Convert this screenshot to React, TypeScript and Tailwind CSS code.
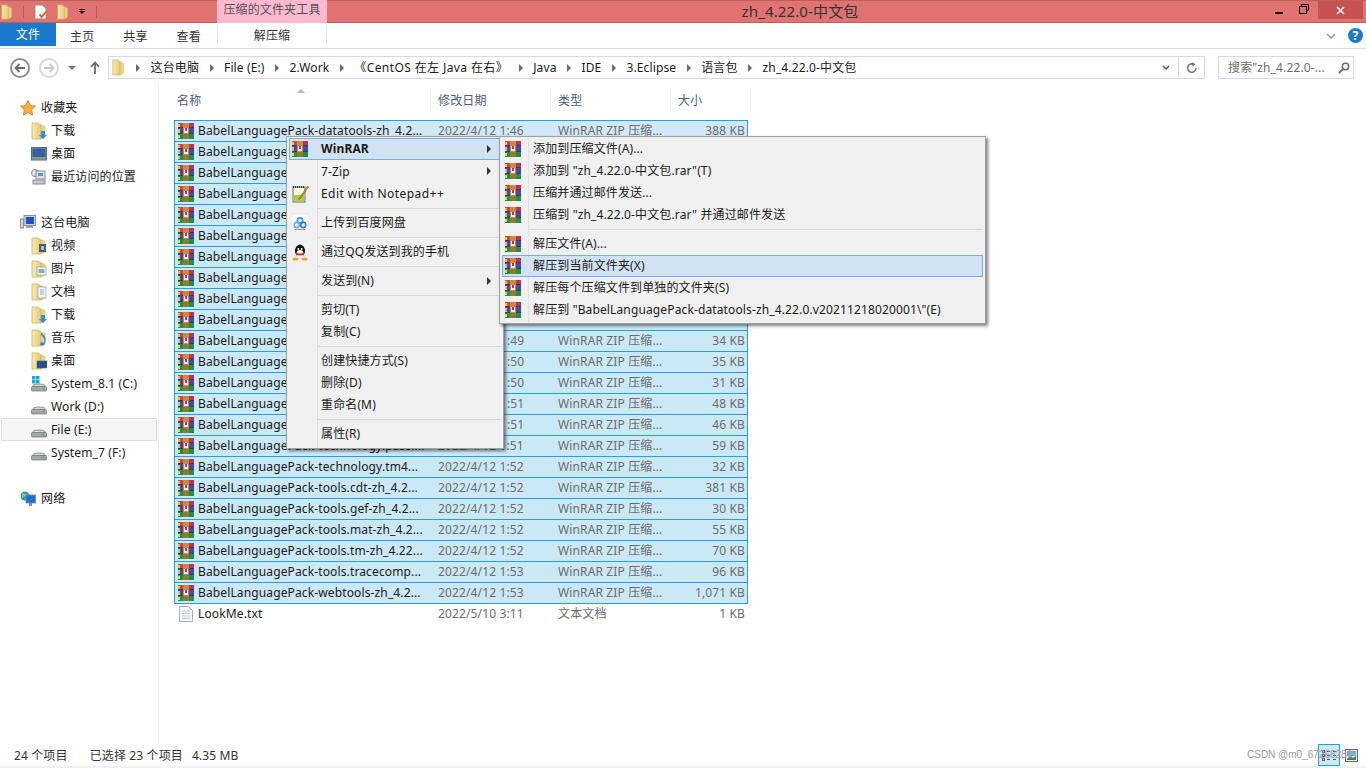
import React from "react";

const FONT = "[font-family:'Noto_Sans','Noto_Sans_CJK_SC',sans-serif] tracking-[0.13px]";

function Rar({ cls = "" }: { cls?: string }) {
  return (
    <svg width="16" height="16" viewBox="0 0 16 16" className={"shrink-0 " + cls} shapeRendering="crispEdges">
      <rect x="0" y="0" width="16" height="5" fill="#c5304f" />
      <rect x="0" y="0" width="5" height="5" fill="#d0463f" />
      <rect x="0" y="1" width="2" height="3" fill="#e9c15a" />
      <rect x="0" y="5" width="16" height="6" fill="#4b46a8" />
      <rect x="0" y="6" width="2" height="4" fill="#d9c26a" />
      <rect x="0" y="11" width="16" height="5" fill="#1f9145" />
      <rect x="0" y="12" width="2" height="3" fill="#dcd27a" />
      <rect x="0" y="4" width="16" height="1" fill="#3a3a6a" />
      <rect x="0" y="10" width="16" height="1" fill="#2c4a3a" />
      <rect x="5" y="0" width="6" height="16" fill="#c98a3f" />
      <rect x="6" y="5" width="4" height="5" fill="#f4efe4" />
      <rect x="7" y="5" width="2" height="3" fill="#c5304f" />
      <rect x="5" y="11" width="6" height="5" fill="#8f7a35" />
    </svg>
  );
}

function Folder({ children, w = 16, h = 18 }: { children?: React.ReactNode; w?: number; h?: number }) {
  return (
    <svg width={w} height={h} viewBox="0 0 16 18" preserveAspectRatio="none" className="shrink-0">
      <defs>
        <linearGradient id="fg" x1="0" x2="1" y1="0" y2="0">
          <stop offset="0" stopColor="#f9eab0" />
          <stop offset="1" stopColor="#e6ca74" />
        </linearGradient>
      </defs>
      <path d="M1 1h6l3 2v14H1z" fill="url(#fg)" stroke="#cfb268" strokeWidth="0.8" />
      <path d="M10 3l4 1.500V15l-4 2z" fill="#ecd488" stroke="#cfb268" strokeWidth="0.6" />
      {children}
    </svg>
  );
}

function Drive({ win }: { win?: boolean }) {
  return (
    <svg width="16" height="16" viewBox="0 0 16 16" className="shrink-0">
      {win && (
        <g fill="#19a5e8">
          <rect x="1" y="0" width="3.500" height="3.500" />
          <rect x="5" y="0" width="3.500" height="3.500" />
          <rect x="1" y="4" width="3.500" height="3.500" />
          <rect x="5" y="4" width="3.500" height="3.500" />
        </g>
      )}
      <path d="M2 9.500C3 7.500 13 7.500 14 9.500V14.500H2z" fill="#d4d7d9" stroke="#7d8184" strokeWidth="0.8" />
      <rect x="0.500" y="10.500" width="15" height="4.500" rx="1" fill="#a3a8ab" stroke="#5f6365" strokeWidth="0.6" />
      <rect x="11.500" y="11.500" width="2" height="2" fill="#5fc23c" />
    </svg>
  );
}

function SideIcon({ k }: { k: string }) {
  if (k === "drive") return <Drive />;
  if (k === "win") return <Drive win />;
  if (k === "desk")
    return (
      <svg width="16" height="14" viewBox="0 0 16 14" className="shrink-0">
        <rect x="0.500" y="0.500" width="15" height="12.500" fill="#8b96a3" stroke="#5f6b78" />
        <rect x="1.500" y="1.500" width="13" height="8.500" fill="#36609f" />
      </svg>
    );
  if (k === "recent")
    return (
      <svg width="16" height="16" viewBox="0 0 16 16" className="shrink-0">
        <circle cx="4" cy="4" r="3.500" fill="#e6e6e6" stroke="#8c8c8c" />
        <rect x="5" y="2" width="9" height="8" fill="#d8e2ea" stroke="#8a8f94" />
        <rect x="7" y="4" width="5" height="3" fill="#5f9ac9" />
        <rect x="2" y="11" width="12" height="4" fill="#c8c8c0" stroke="#8a8f94" />
      </svg>
    );
  const inner: Record<string, React.ReactNode> = {
    dl: <path d="M10 9h4v4h2l-4 4-4-4h2z" fill="#2f8fdc" />,
    vid: (
      <g>
        <rect x="8" y="7" width="7" height="8" fill="#4a5a66" />
        <rect x="10" y="9" width="3" height="4" fill="#a9c0cf" />
      </g>
    ),
    pic: (
      <g>
        <rect x="6" y="7" width="9" height="8" fill="#f4f6f7" stroke="#8a959c" strokeWidth="0.6" />
        <rect x="7.500" y="9" width="6" height="4" fill="#79b2c9" />
      </g>
    ),
    doc: (
      <g>
        <rect x="7" y="4" width="8" height="11" fill="#f4f6f7" stroke="#8a959c" strokeWidth="0.6" />
        <path d="M9 7h4M9 9h4M9 11h4" stroke="#7a9cc0" strokeWidth="0.8" />
      </g>
    ),
    music: <path d="M10 4c5 2 6 8 3 12-1 1-4 1-4-1s3-2 4-1c1-3 0-6-3-8z" fill="#2f8fdc" />,
    deskf: <rect x="6" y="9" width="10" height="7" fill="#26508f" stroke="#4f5a66" strokeWidth="0.6" />,
  };
  return <Folder>{inner[k]}</Folder>;
}

function SideRow({ icon, label, active }: { icon: string; label: string; active?: boolean }) {
  return (
    <div
      className={
        "h-[23px] flex items-center pl-[29px] mx-[1px] border " +
        (active ? "bg-[#f5f5f5] border-[#dedede]" : "border-transparent")
      }
    >
      <div className="w-[17px] flex justify-center shrink-0 -ml-[1px]">
        <SideIcon k={icon} />
      </div>
      <span className="ml-[4px] text-[12px] text-[#1a1a1a] whitespace-nowrap">{label}</span>
    </div>
  );
}

function SideHead({ icon, label }: { icon: React.ReactNode; label: string }) {
  return (
    <div className="h-[23px] flex items-center pl-[20px]">
      <div className="w-[16px] flex justify-center shrink-0">{icon}</div>
      <span className="ml-[5px] text-[12px] text-[#1a1a1a]">{label}</span>
    </div>
  );
}

const TYPE = "WinRAR ZIP 压缩...";
const NAME = "BabelLanguage";

const files: [string, string, string, string, number][] = [
  ["BabelLanguagePack-datatools-zh_4.2...", "2022/4/12 1:46", TYPE, "388 KB", 0],
  [NAME, "", "", "", 0],
  [NAME, "", "", "", 0],
  [NAME, "", "", "", 0],
  [NAME, "", "", "", 0],
  [NAME, "", "", "", 0],
  [NAME, "", "", "", 0],
  [NAME, "", "", "", 0],
  [NAME, "", "", "", 0],
  [NAME, "", "", "", 0],
  [NAME, ":49", TYPE, "34 KB", 69],
  [NAME, ":50", TYPE, "35 KB", 69],
  [NAME, ":50", TYPE, "31 KB", 69],
  [NAME, ":51", TYPE, "48 KB", 69],
  [NAME, ":51", TYPE, "46 KB", 69],
  ["BabelLanguagePack-technology.passi...", "2022/4/12 1:51", TYPE, "59 KB", 0],
  ["BabelLanguagePack-technology.tm4...", "2022/4/12 1:52", TYPE, "32 KB", 0],
  ["BabelLanguagePack-tools.cdt-zh_4.2...", "2022/4/12 1:52", TYPE, "381 KB", 0],
  ["BabelLanguagePack-tools.gef-zh_4.2...", "2022/4/12 1:52", TYPE, "30 KB", 0],
  ["BabelLanguagePack-tools.mat-zh_4.2...", "2022/4/12 1:52", TYPE, "55 KB", 0],
  ["BabelLanguagePack-tools.tm-zh_4.22...", "2022/4/12 1:52", TYPE, "70 KB", 0],
  ["BabelLanguagePack-tools.tracecomp...", "2022/4/12 1:53", TYPE, "96 KB", 0],
  ["BabelLanguagePack-webtools-zh_4.2...", "2022/4/12 1:53", TYPE, "1,071 KB", 0],
];

function FileRow({ n, d, t, s, sel, first, icon, pad = 0 }: { n: string; d: string; t: string; s: string; sel?: boolean; first?: boolean; icon: React.ReactNode; pad?: number }) {
  return (
    <div
      className={
        "flex items-center text-[12px] box-border -mt-[1px] " +
        (sel
          ? "border border-[#26a0da] h-[22px] " + (first ? "bg-[#d1e8fb]" : "bg-[#cbe8f6]")
          : "h-[21px] border border-transparent")
      }
    >
      <div className="w-[20px] pl-[3px] flex shrink-0">{icon}</div>
      <div className="w-[243px] shrink-0 pl-[3px] text-[#1a1a1a] whitespace-nowrap overflow-hidden">{n}</div>
      <div className="w-[120px] shrink-0 text-[#6d6d6d] whitespace-nowrap" style={{ paddingLeft: pad }}>{d}</div>
      <div className="w-[108px] shrink-0 text-[#6d6d6d] whitespace-nowrap">{t}</div>
      <div className="w-[81px] shrink-0 text-right pr-[2px] text-[#6d6d6d] whitespace-nowrap">{s}</div>
    </div>
  );
}

function Crumb({ t, wide }: { t: string; wide?: boolean }) {
  return (
    <>
      <span className="w-0 h-0 border-y-[4px] border-y-transparent border-l-[4px] border-l-[#6b6b6b] shrink-0" />
      <span className={"text-[12px] text-[#1a1a1a] whitespace-nowrap " + (wide ? "tracking-[0.4px]" : "")}>{t}</span>
    </>
  );
}

function MenuItem({ label, icon, bold, arrow, hi, tall, sub, wide }: { label: string; icon?: React.ReactNode; bold?: boolean; arrow?: boolean; hi?: boolean; tall?: boolean; sub?: boolean; wide?: boolean }) {
  return (
    <div
      className={
        "flex items-center border mx-[2px] relative " +
        (tall ? "h-[23px] " : "h-[22px] ") +
        (hi ? "bg-[#d1e2f2] border-[#78aee5]" : "border-transparent")
      }
    >
      <div className={"flex justify-center shrink-0 " + (sub ? "w-[19px]" : "w-[20px]")}>{icon}</div>
      <span
        className={
          "text-[12px] text-[#1a1a1a] whitespace-nowrap ml-[11px] " +
          (bold ? "font-bold " : "") +
          (wide ? "tracking-[0.45px]" : "")
        }
      >
        {label}
      </span>
      {arrow && (
        <span className="absolute right-[9px] top-[6px] w-0 h-0 border-y-[4px] border-y-transparent border-l-[4px] border-l-[#333]" />
      )}
    </div>
  );
}

function Sep({ sub }: { sub?: boolean }) {
  return (
    <div className={"h-[7px] flex items-center mr-[2px] " + (sub ? "ml-[29px]" : "ml-[31px]")}>
      <div className="h-[1px] w-full bg-[#d7d7d7]" />
    </div>
  );
}

function Notepad() {
  return (
    <svg width="17" height="18" viewBox="0 0 17 18">
      <rect x="1" y="2" width="12" height="15" fill="#f6f4e4" stroke="#6f6f6f" />
      <path d="M1 2h12" stroke="#333" strokeDasharray="1 1" strokeWidth="2" />
      <rect x="2" y="10" width="10" height="6" fill="#a6cf3f" />
      <path d="M15.500 1L8 12l-1.500 2.500L9 13 16.500 2z" fill="#d89a2b" stroke="#7a4a10" strokeWidth="0.5" />
    </svg>
  );
}

function Baidu() {
  return (
    <svg width="16" height="16" viewBox="0 0 16 16">
      <rect width="16" height="16" rx="3" fill="#fff" />
      <circle cx="8" cy="5.500" r="2.600" fill="none" stroke="#3d8fe8" strokeWidth="1.600" />
      <circle cx="4.800" cy="10" r="2.600" fill="none" stroke="#4bb8f0" strokeWidth="1.600" />
      <circle cx="11.200" cy="10" r="2.600" fill="none" stroke="#3d6fe8" strokeWidth="1.600" />
      <path d="M3 14.500h10" stroke="#f06a7a" strokeWidth="1" />
    </svg>
  );
}

function QQ() {
  return (
    <svg width="16" height="17" viewBox="0 0 16 17">
      <ellipse cx="8" cy="7" rx="5" ry="6.500" fill="#111" />
      <ellipse cx="8" cy="10" rx="3.600" ry="4" fill="#fff" />
      <circle cx="6.300" cy="5" r="1" fill="#fff" />
      <circle cx="9.700" cy="5" r="1" fill="#fff" />
      <path d="M4 8.500c2.500 1.500 5.500 1.500 8 0v2c-2.500 1.300-5.500 1.300-8 0z" fill="#e02020" />
      <ellipse cx="3.500" cy="15" rx="3" ry="1.500" fill="#f0a020" />
      <ellipse cx="12.500" cy="15" rx="3" ry="1.500" fill="#f0a020" />
    </svg>
  );
}

function ListLine() {
  return (
    <div className="flex items-center gap-[2px]">
      <div className="w-[3px] h-[3px] border border-[#666]" />
      <div className="w-[9px] border-t border-dashed border-[#555]" />
    </div>
  );
}

export default function App() {
  return (
    <div className={"relative w-[1366px] h-[768px] overflow-hidden bg-white flex flex-col " + FONT}>
      {/* title bar */}
      <div className="h-[23px] shrink-0 bg-[#e07370] border-b border-[#c25c5a] border-t border-t-[#b9605e] flex items-center relative">
        <div className="flex items-center w-[217px] shrink-0">
          <div className="ml-[1px]"><Folder w={12} h={16} /></div>
          <div className="w-[1px] h-[12px] bg-[#a86060] ml-[10px]" />
          <svg width="14" height="16" viewBox="0 0 15 17" className="ml-[10px]">
            <path d="M1 1h8l4 4v11H1z" fill="#fff" stroke="#888" />
            <path d="M6 11l2 3 5-6" stroke="#e0622a" strokeWidth="2" fill="none" />
          </svg>
          <div className="ml-[9px]"><Folder w={12} h={16} /></div>
          <div className="ml-[10px] flex flex-col items-center gap-[1px]">
            <div className="w-[6px] h-[1px] bg-[#111]" />
            <span className="w-0 h-0 border-x-[3px] border-x-transparent border-t-[3px] border-t-[#111]" />
          </div>
          <div className="w-[1px] h-[12px] bg-[#a86060] ml-[11px]" />
        </div>
        <div className="w-[110px] h-[23px] -mt-[1px] bg-[#fdb9d0] text-[12px] text-[#555] text-center leading-[20px] shrink-0">压缩的文件夹工具</div>
        <div className="flex-1 text-center text-[15px] text-[#333] pl-[42px]">zh_4.22.0-中文包</div>
        <div className="flex items-start h-full w-[135px] shrink-0">
          <div className="w-[23px] flex justify-center mt-[11px] ml-[36px]"><div className="w-[8px] h-[2px] bg-[#111]" /></div>
          <div className="w-[27px] flex justify-center mt-[3px]">
            <svg width="10" height="10" viewBox="0 0 10 10">
              <path d="M2.500 2.500V.5h7v6H7.500" fill="none" stroke="#111" />
              <rect x=".5" y="2.500" width="7" height="7" fill="none" stroke="#111" />
            </svg>
          </div>
          <div className="w-[45px] h-[18px] ml-[1px] bg-[#c65253] flex items-center justify-center">
            <svg width="9" height="9" viewBox="0 0 9 9"><path d="M1 1l7 7M8 1L1 8" stroke="#fff" strokeWidth="1.500" /></svg>
          </div>
        </div>
      </div>
      {/* ribbon */}
      <div className="h-[26px] shrink-0 border-b border-[#dadbdc] flex items-start relative">
        <div className="w-[56px] h-[23px] bg-[#1979ca] text-white text-[12px] flex items-center justify-center">文件</div>
        <div className="w-[161px] flex text-[12px] text-[#333] h-[23px] items-center pt-[4px]">
          <span className="ml-[14px]">主页</span>
          <span className="ml-[29px]">共享</span>
          <span className="ml-[29px]">查看</span>
        </div>
        <div className="w-[110px] h-[20px] border-x border-[#e4e4e4] text-[12px] text-[#333] text-center leading-[25px]">解压缩</div>
        <div className="ml-auto flex items-center h-[25px] mr-[2px]">
          <svg width="10" height="6" viewBox="0 0 10 6" className="mr-[12px]"><path d="M1 1l4 4 4-4" stroke="#9a9a9a" strokeWidth="1.500" fill="none" /></svg>
          <div className="w-[15px] h-[15px] rounded-full bg-[#1979ca] text-white text-[12px] font-bold flex items-center justify-center mr-[1px]">?</div>
        </div>
      </div>
      {/* address row */}
      <div className="h-[33px] mt-[2px] shrink-0 flex items-center">
        <div className="w-[108px] flex items-center shrink-0">
          <div className="ml-[10px] w-[20px] h-[20px] rounded-full border-2 border-[#8f8f8f] flex items-center justify-center">
            <svg width="12" height="10" viewBox="0 0 12 10"><path d="M11 5H2M5.500 1L1.500 5l4 4" stroke="#6a6a6a" strokeWidth="1.800" fill="none" /></svg>
          </div>
          <div className="ml-[9px] w-[20px] h-[20px] rounded-full border-2 border-[#d8d8d8] flex items-center justify-center">
            <svg width="12" height="10" viewBox="0 0 12 10"><path d="M1 5h9M6.500 1l4 4-4 4" stroke="#c8c8c8" strokeWidth="1.800" fill="none" /></svg>
          </div>
          <span className="ml-[9px] w-0 h-0 border-x-[4px] border-x-transparent border-t-[4px] border-t-[#7a7a7a]" />
          <svg width="10" height="13" viewBox="0 0 10 13" className="ml-[14px]"><path d="M5 13V2M1 6l4-4.500L9 6" stroke="#6a6a6a" strokeWidth="1.800" fill="none" /></svg>
        </div>
        <div className="w-[1097px] h-[23px] border border-[#d9d9d9] flex items-center shrink-0 relative">
          <div className="ml-[3px]"><Folder w={13} h={17} /></div>
          <div className="ml-[11px] flex items-center gap-[10.5px]">
            <Crumb t="这台电脑" />
            <Crumb t="File (E:)" />
            <Crumb t="2.Work" />
            <Crumb t="《CentOS 在左 Java 在右》" wide />
            <Crumb t="Java" />
            <Crumb t="IDE" />
            <Crumb t="3.Eclipse" />
            <Crumb t="语言包" />
            <Crumb t="zh_4.22.0-中文包" />
          </div>
          <div className="ml-auto w-[25px] flex items-center justify-center h-full border-r border-[#d9d9d9]">
            <svg width="8" height="6" viewBox="0 0 8 6"><path d="M1 1l3 3 3-3" stroke="#555" strokeWidth="1.500" fill="none" /></svg>
          </div>
          <div className="w-[25px] flex items-center justify-center h-full">
            <svg width="12" height="12" viewBox="0 0 12 12"><path d="M8 2.500A4.200 4.200 0 1 0 10 6" stroke="#777" strokeWidth="1.600" fill="none" /><path d="M6.500 0l3 2.500-3 2z" fill="#777" /></svg>
          </div>
        </div>
        <div className="ml-[13px] w-[136px] h-[23px] border border-[#d9d9d9] flex items-center shrink-0 pl-[9px]">
          <span className="text-[12px] text-[#6d6d6d] whitespace-nowrap">搜索"zh_4.22.0-...</span>
          <svg width="12" height="12" viewBox="0 0 12 12" className="ml-auto mr-[3px]"><circle cx="7.500" cy="4.500" r="3.200" fill="none" stroke="#6a6a6a" strokeWidth="1.500" /><path d="M5 7l-4 4" stroke="#6a6a6a" strokeWidth="2" /></svg>
        </div>
      </div>
      {/* body */}
      <div className="flex-1 flex min-h-0">
        <div className="w-[159px] shrink-0 border-r border-[#f0f0f0] pt-[12px]">
          <SideHead
            label="收藏夹"
            icon={
              <svg width="16" height="16" viewBox="0 0 16 16"><path d="M8 .5l2.300 4.900 5.200.700-3.800 3.700.9 5.300L8 12.500l-4.600 2.600.9-5.300L.5 6.100l5.200-.700z" fill="#f7b03c" stroke="#d9772a" strokeWidth="0.800" /></svg>
            }
          />
          <SideRow icon="dl" label="下载" />
          <SideRow icon="desk" label="桌面" />
          <SideRow icon="recent" label="最近访问的位置" />
          <div className="h-[23px]" />
          <SideHead
            label="这台电脑"
            icon={
              <svg width="16" height="15" viewBox="0 0 16 15"><rect x="4" y="0.500" width="11.500" height="10" fill="#c9d2da" stroke="#8a8f94" /><rect x="6" y="2" width="8" height="7" fill="#1f4fc0" /><rect x="0.500" y="4" width="3" height="9" fill="#d8d8d0" stroke="#8a8f94" /><rect x="6" y="11" width="7" height="2" fill="#a0a5aa" /></svg>
            }
          />
          <SideRow icon="vid" label="视频" />
          <SideRow icon="pic" label="图片" />
          <SideRow icon="doc" label="文档" />
          <SideRow icon="dl" label="下载" />
          <SideRow icon="music" label="音乐" />
          <SideRow icon="deskf" label="桌面" />
          <SideRow icon="win" label="System_8.1 (C:)" />
          <SideRow icon="drive" label="Work (D:)" />
          <SideRow icon="drive" label="File (E:)" active />
          <SideRow icon="drive" label="System_7 (F:)" />
          <div className="h-[23px]" />
          <SideHead
            label="网络"
            icon={
              <svg width="16" height="16" viewBox="0 0 16 16"><circle cx="5" cy="5" r="4.500" fill="#3f9f5f" /><path d="M2 3c2-1 4 0 5 1-1 2-3 1-5 3z" fill="#6fc0ef" /><rect x="6" y="4" width="9.500" height="8" fill="#1f6fd8" stroke="#7a8a9a" strokeWidth="0.800" /><rect x="9" y="12" width="3" height="3" fill="#8a8f94" /></svg>
            }
          />
        </div>
        <div className="flex-1 relative min-w-0">
          {/* header */}
          <div className="h-[24px] mt-[4px] ml-[8px] flex text-[12px] text-[#4c607a] relative">
            <div className="w-[264px] border-r border-[#eeeeee] pl-[10px] pt-[4px]">名称</div>
            <div className="w-[120px] border-r border-[#eeeeee] pl-[7px] pt-[4px]">修改日期</div>
            <div className="w-[120px] border-r border-[#eeeeee] pl-[7px] pt-[4px]">类型</div>
            <div className="w-[80px] border-r border-[#eeeeee] pl-[7px] pt-[4px]">大小</div>
            <span className="absolute left-[130px] top-[1px] w-0 h-0 border-x-[4px] border-x-transparent border-b-[4px] border-b-[#9dbcd4]" />
          </div>
          <div className="ml-[15px] w-[574px] mt-[8px] pt-[1px]">
            {files.map((f, i) => (
              <FileRow key={i} n={f[0]} d={f[1]} t={f[2]} s={f[3]} pad={f[4]} sel first={i === 0} icon={<Rar />} />
            ))}
            <FileRow
              n="LookMe.txt"
              d="2022/5/10 3:11"
              t="文本文档"
              s="1 KB"
              icon={
                <svg width="14" height="16" viewBox="0 0 14 16" className="ml-[1px]">
                  <path d="M.5.500h9l4 4v11H.5z" fill="#f8f9fa" stroke="#a5adb5" />
                  <path d="M3 5h8M3 7.500h8M3 10h8M3 12.500h8" stroke="#c2c8ce" />
                </svg>
              }
            />
          </div>
        </div>
      </div>
      {/* status bar */}
      <div className="h-[23px] shrink-0 border-b-[2px] border-[#f0f0f0] flex items-center text-[12px] text-[#333] relative">
        <span className="ml-[14px]">24 个项目</span>
        <span className="ml-[22px]">已选择 23 个项目</span>
        <span className="ml-[9px]">4.35 MB</span>
        <div className="absolute left-[1318px] top-[-1px] w-[22px] h-[22px] bg-[#cbe8f6] border border-[#26a0da] flex flex-col justify-center gap-[1px] pl-[3px]">
          <ListLine />
          <ListLine />
          <ListLine />
        </div>
        <svg width="13" height="13" viewBox="0 0 13 13" className="absolute left-[1345px] top-[4px]">
          <rect x=".5" y=".5" width="12" height="12" fill="#eaf3f7" stroke="#667" />
          <rect x="2" y="2" width="9" height="5" fill="#79b2c9" />
          <path d="M2 10l3-3 3 2 3-2v4H2z" fill="#4a7a5a" />
        </svg>
        <span className="absolute left-[1247px] top-[2px] text-[10px] tracking-normal text-[#9a9a9a] whitespace-nowrap [font-family:'Liberation_Sans',sans-serif]">CSDN @m0_67268286</span>
      </div>

      {/* context menu */}
      <div className="absolute left-[286px] top-[136px] w-[218px] h-[313px] bg-[#f0f0f0] border border-[#a0a0a0] shadow-[2px_2px_3px_rgba(0,0,0,0.5)] pt-[1px]">
        <div className="absolute left-[30px] top-[1px] bottom-[1px] w-[1px] bg-[#e2e2e2]" />
        <MenuItem label="WinRAR" bold arrow hi icon={<Rar />} />
        <MenuItem label="7-Zip" arrow tall />
        <MenuItem label="Edit with Notepad++" wide icon={<Notepad />} />
        <Sep />
        <MenuItem label="上传到百度网盘" icon={<Baidu />} />
        <Sep />
        <MenuItem label="通过QQ发送到我的手机" icon={<QQ />} />
        <Sep />
        <MenuItem label="发送到(N)" arrow />
        <Sep />
        <MenuItem label="剪切(T)" />
        <MenuItem label="复制(C)" />
        <Sep />
        <MenuItem label="创建快捷方式(S)" />
        <MenuItem label="删除(D)" />
        <MenuItem label="重命名(M)" />
        <Sep />
        <MenuItem label="属性(R)" />
      </div>
      {/* submenu */}
      <div className="absolute left-[499px] top-[136px] w-[487px] h-[188px] bg-[#f0f0f0] border border-[#a0a0a0] shadow-[2px_2px_3px_rgba(0,0,0,0.5)] pt-[1px]">
        <div className="absolute left-[28px] top-[1px] bottom-[1px] w-[1px] bg-[#e2e2e2]" />
        <MenuItem sub label="添加到压缩文件(A)..." icon={<Rar />} />
        <MenuItem sub label={'添加到 "zh_4.22.0-中文包.rar"(T)'} icon={<Rar />} />
        <MenuItem sub label="压缩并通过邮件发送..." icon={<Rar />} />
        <MenuItem sub label={'压缩到 "zh_4.22.0-中文包.rar" 并通过邮件发送'} icon={<Rar />} />
        <Sep sub />
        <MenuItem sub label="解压文件(A)..." icon={<Rar />} />
        <MenuItem sub label="解压到当前文件夹(X)" hi icon={<Rar />} />
        <MenuItem sub label="解压每个压缩文件到单独的文件夹(S)" icon={<Rar />} />
        <MenuItem sub label={'解压到 "BabelLanguagePack-datatools-zh_4.22.0.v20211218020001\\"(E)'} icon={<Rar />} />
      </div>
    </div>
  );
}
